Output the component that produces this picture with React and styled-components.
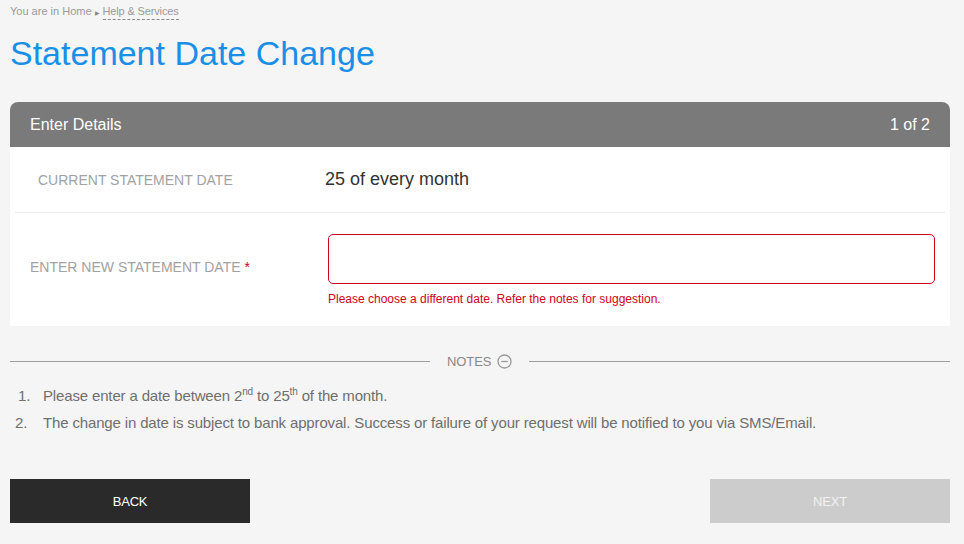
import React from 'react'
import styled, { createGlobalStyle } from 'styled-components'

const GlobalStyle = createGlobalStyle`
  html, body {
    margin: 0;
    padding: 0;
    background: #f5f5f5;
    font-family: 'Liberation Sans', Arial, sans-serif;
  }
`

const Page = styled.div`
  width: 940px;
  padding: 0 14px 0 10px;
  box-sizing: content-box;
`

const Breadcrumb = styled.div`
  display: flex;
  align-items: center;
  gap: 3px;
  padding-top: 5px;
  font-size: 11px;
  color: #9a9a9a;
`

const Crumb = styled.span`
  padding-bottom: 2px;
  letter-spacing: ${p => (p.active ? '-0.15px' : '0')};
  border-bottom: 1px dashed ${p => (p.active ? '#8a8a8a' : 'transparent')};
`

const Caret = styled.span`
  font-size: 6px;
  color: #888;
`

const Title = styled.h1`
  margin: 13px 0 0;
  font-size: 34px;
  font-weight: 400;
  color: #1b8fe6;
  line-height: 40px;
`

const Card = styled.section`
  margin-top: 29px;
  background: #fff;
  border-radius: 8px 8px 0 0;
  overflow: hidden;
`

const CardHeader = styled.div`
  height: 45px;
  background: #7a7a7a;
  color: #fff;
  display: flex;
  align-items: center;
  justify-content: space-between;
  padding: 0 20px;
  font-size: 16px;
`

const Row = styled.div`
  display: flex;
  align-items: ${p => (p.top ? 'flex-start' : 'center')};
  margin: 0 5px;
  padding: ${p => p.pad};
  border-bottom: ${p => (p.divider ? '1px solid #ebebeb' : 'none')};
  min-height: ${p => p.height};
  box-sizing: border-box;
`

const Label = styled.div`
  width: ${p => p.width};
  flex-shrink: 0;
  font-size: 14px;
  color: #a2a2a2;
  text-transform: uppercase;
  padding-top: ${p => p.offset || '0'};
`

const Required = styled.span`
  color: #d0021b;
`

const Value = styled.div`
  font-size: 18px;
  color: #333;
`

const Field = styled.div`
  flex: 1;
  margin-right: 10px;
`

const Input = styled.input`
  display: block;
  width: 100%;
  height: 50px;
  box-sizing: border-box;
  border: 1px solid #d0021b;
  border-radius: 5px;
  outline: none;
  background: #fff;
  font-family: inherit;
  font-size: 15px;
  padding: 0 12px;
`

const Error = styled.div`
  margin-top: 8px;
  font-size: 12px;
  color: #d0021b;
`

const NotesDivider = styled.div`
  display: flex;
  align-items: center;
  margin-top: 28px;
`

const Line = styled.div`
  height: 1px;
  background: #9e9e9e;
  width: ${p => p.width || 'auto'};
  flex: ${p => (p.grow ? 1 : 'none')};
`

const NotesLabel = styled.div`
  display: flex;
  align-items: center;
  gap: 6px;
  padding: 0 17px;
  font-size: 13px;
  color: #888;
  letter-spacing: -0.1px;
`

const NotesList = styled.ol`
  margin: 18px 0 0;
  padding: 0;
  list-style: none;
`

const NoteItem = styled.li`
  display: flex;
  font-size: 15px;
  color: #6f6f6f;
  letter-spacing: -0.15px;
  line-height: 18px;
  margin-bottom: 9px;

  sup {
    font-size: 10px;
    line-height: 0;
    vertical-align: 6px;
  }
`

const Num = styled.span`
  width: 33px;
  padding-left: ${p => p.indent};
  box-sizing: border-box;
  flex-shrink: 0;
`

const Actions = styled.div`
  display: flex;
  justify-content: space-between;
  margin-top: 47px;
`

const Button = styled.button`
  width: 240px;
  height: 44px;
  border: none;
  border-radius: 0;
  font-family: inherit;
  font-size: 13px;
  text-transform: uppercase;
  letter-spacing: -0.2px;
  color: ${p => (p.primary ? '#fff' : '#f2f2f2')};
  background: ${p => (p.primary ? '#2b2a2b' : '#cccccc')};
  cursor: ${p => (p.primary ? 'pointer' : 'default')};
`

const MinusCircle = () => (
  <svg width="15" height="15" viewBox="0 0 15 15">
    <circle cx="7.5" cy="7.5" r="6.5" fill="none" stroke="#999" strokeWidth="1.3" />
    <line x1="4.2" y1="7.5" x2="10.8" y2="7.5" stroke="#999" strokeWidth="1.3" />
  </svg>
)

export default function App() {
  return (
    <Page>
      <GlobalStyle />
      <Breadcrumb>
        <Crumb>You are in Home</Crumb>
        <Caret>▶</Caret>
        <Crumb active>Help &amp; Services</Crumb>
      </Breadcrumb>
      <Title>Statement Date Change</Title>

      <Card>
        <CardHeader>
          <span>Enter Details</span>
          <span>1 of 2</span>
        </CardHeader>
        <Row divider height="66px" pad="0 0 0 23px">
          <Label width="287px">Current Statement Date</Label>
          <Value>25 of every month</Value>
        </Row>
        <Row top height="113px" pad="21px 0 0 15px">
          <Label width="298px" offset="25px">
            Enter New Statement Date <Required>*</Required>
          </Label>
          <Field>
            <Input type="text" />
            <Error>Please choose a different date. Refer the notes for suggestion.</Error>
          </Field>
        </Row>
      </Card>

      <NotesDivider>
        <Line width="420px" />
        <NotesLabel>
          NOTES <MinusCircle />
        </NotesLabel>
        <Line grow />
      </NotesDivider>

      <NotesList>
        <NoteItem>
          <Num indent="8px">1.</Num>
          <span>
            Please enter a date between 2<sup>nd</sup> to 25<sup>th</sup> of the month.
          </span>
        </NoteItem>
        <NoteItem>
          <Num indent="5px">2.</Num>
          <span>
            The change in date is subject to bank approval. Success or failure of your request will be notified to you via SMS/Email.
          </span>
        </NoteItem>
      </NotesList>

      <Actions>
        <Button primary>Back</Button>
        <Button disabled>Next</Button>
      </Actions>
    </Page>
  )
}
